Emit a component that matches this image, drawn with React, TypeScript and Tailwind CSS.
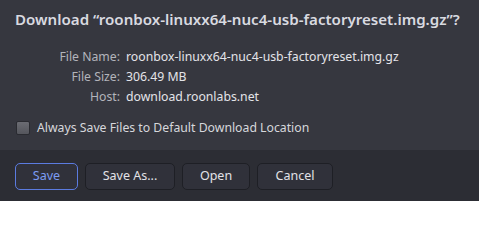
const rows = [
  { label: "File Name:", value: "roonbox-linuxx64-nuc4-usb-factoryreset.img.gz" },
  { label: "File Size:", value: "306.49 MB" },
  { label: "Host:", value: "download.roonlabs.net" },
];

function Button({ children, primary, width }: { children: React.ReactNode; primary?: boolean; width: string }) {
  return (
    <button
      className={
        (primary
          ? "border-[#5b7be0] text-[#7c9cf2] "
          : "border-[#1e1f25] text-[#e2e2e7] ") +
        "h-[27px] rounded-[5px] border bg-[#30313a] text-[12.5px] " +
        width
      }
    >
      {children}
    </button>
  );
}

export default function App() {
  return (
    <div className="flex h-[201px] w-[479px] flex-col bg-[#36373f] font-['Noto_Sans',sans-serif]">
      <div className="flex-1 px-[15px] pt-[8px]">
        <h1 className="text-[15.1px] font-semibold leading-[22px] text-[#d9dae0]">
          Download “roonbox-linuxx64-nuc4-usb-factoryreset.img.gz”?
        </h1>
        <div className="mt-[17px] grid grid-cols-[105px_1fr] gap-x-[6px] text-[12.25px] leading-[20px]">
          {rows.map((r) => (
            <div key={r.label} className="contents">
              <span className="text-right text-[#b3b4bb]">{r.label}</span>
              <span className="text-[#e4e4e9]">{r.value}</span>
            </div>
          ))}
        </div>
        <label className="mt-[12px] flex items-center gap-[7px] pl-px text-[12.25px] text-[#d6d7dc]">
          <span className="h-[14px] w-[14px] rounded-[2px] border border-[#2a2b31] bg-gradient-to-b from-[#6b6c73] to-[#55565d]" />
          Always Save Files to Default Download Location
        </label>
      </div>
      <div className="flex h-[51px] gap-[7px] bg-[#2c2d34] px-[15px] pt-[13px]">
        <Button primary width="w-[63px]">Save</Button>
        <Button width="w-[90px]">Save As...</Button>
        <Button width="w-[68px]">Open</Button>
        <Button width="w-[76px]">Cancel</Button>
      </div>
    </div>
  );
}
